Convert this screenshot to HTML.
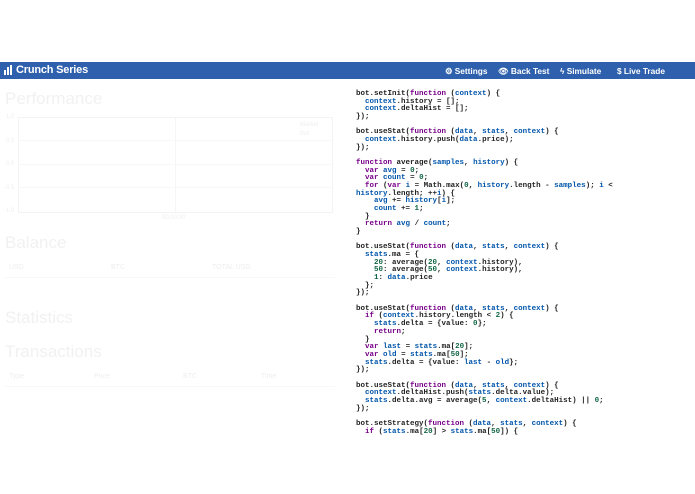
<!DOCTYPE html>
<html><head><meta charset="utf-8"><style>
body{margin:0;width:695px;height:494px;background:#fff;font-family:"Liberation Sans",sans-serif;position:relative;overflow:hidden}
.nav{position:absolute;left:0;top:62px;width:695px;height:17px;background:#2e60ad;color:#fff;font-weight:bold;font-size:9px}
.brand{position:absolute;left:16px;top:2px;font-size:11px;letter-spacing:-0.2px}
.bar{position:absolute;background:#fff;width:2px}
.nl{position:absolute;top:4px;font-size:8.3px}
.h{position:absolute;left:5px;color:#f1f1f1;font-size:17px}
.s{position:absolute;color:#eee;font-size:6px}
pre{position:absolute;left:356px;top:91px;margin:0;font-family:"Liberation Mono",monospace;font-size:7.5px;line-height:7.67px;color:#222;font-weight:bold}
.k{color:#708}.v{color:#05a}.n{color:#164}
</style></head><body>
<div class="nav"><span class="bar" style="left:4px;top:8px;height:5px"></span><span class="bar" style="left:7px;top:5px;height:8px"></span><span class="bar" style="left:10px;top:3px;height:10px"></span><span class="brand">Crunch Series</span>
<span class="nl" style="left:445px">⚙ Settings</span>
<span class="nl" style="left:498px">👁 Back Test</span>
<span class="nl" style="left:560px">ϟ Simulate</span>
<span class="nl" style="left:617px">$ Live Trade</span></div>
<div class="h" style="top:89px">Performance</div>
<div style="position:absolute;left:18px;top:117px;width:313px;height:94px;border:1px solid #f3f3f3"></div>
<div style="position:absolute;left:175px;top:117px;width:1px;height:95px;background:#f5f5f5"></div>
<div style="position:absolute;left:18px;top:140px;width:313px;height:1px;background:#f7f7f7"></div>
<div style="position:absolute;left:18px;top:164px;width:313px;height:1px;background:#f7f7f7"></div>
<div style="position:absolute;left:18px;top:187px;width:313px;height:1px;background:#f7f7f7"></div>
<div class="s" style="left:6px;top:114px">1.0</div><div class="s" style="left:6px;top:138px">0.5</div><div class="s" style="left:6px;top:161px">0.0</div><div class="s" style="left:4px;top:185px">-0.5</div><div class="s" style="left:4px;top:208px">-1.0</div>
<div class="s" style="left:162px;top:215px">00:00:00</div>
<div class="s" style="left:300px;top:122px">Market</div><div class="s" style="left:300px;top:131px">Bot</div>
<div class="h" style="top:233px">Balance</div>
<div class="s" style="left:9px;top:264px;font-size:7px">USD</div><div class="s" style="left:111px;top:264px;font-size:7px">BTC</div><div class="s" style="left:212px;top:264px;font-size:7px">TOTAL USD</div>
<div style="position:absolute;left:5px;top:277px;width:330px;height:1px;background:#f7f7f7"></div>
<div class="h" style="top:308px">Statistics</div>
<div class="h" style="top:342px">Transactions</div>
<div class="s" style="left:9px;top:373px;font-size:7px">Type</div><div class="s" style="left:94px;top:373px;font-size:7px">Price</div><div class="s" style="left:183px;top:373px;font-size:7px">BTC</div><div class="s" style="left:261px;top:373px;font-size:7px">Time</div>
<div style="position:absolute;left:5px;top:386px;width:330px;height:1px;background:#f7f7f7"></div>
<pre>bot.setInit(<span class="k">function</span> (<span class="v">context</span>) {
  <span class="v">context</span>.history = [];
  <span class="v">context</span>.deltaHist = [];
});

bot.useStat(<span class="k">function</span> (<span class="v">data</span>, <span class="v">stats</span>, <span class="v">context</span>) {
  <span class="v">context</span>.history.push(<span class="v">data</span>.price);
});

<span class="k">function</span> average(<span class="v">samples</span>, <span class="v">history</span>) {
  <span class="k">var</span> <span class="v">avg</span> = <span class="n">0</span>;
  <span class="k">var</span> <span class="v">count</span> = <span class="n">0</span>;
  <span class="k">for</span> (<span class="k">var</span> <span class="v">i</span> = Math.max(<span class="n">0</span>, <span class="v">history</span>.length - <span class="v">samples</span>); <span class="v">i</span> &lt;
<span class="v">history</span>.length; ++<span class="v">i</span>) {
    <span class="v">avg</span> += <span class="v">history</span>[<span class="v">i</span>];
    <span class="v">count</span> += <span class="n">1</span>;
  }
  <span class="k">return</span> <span class="v">avg</span> / <span class="v">count</span>;
}

bot.useStat(<span class="k">function</span> (<span class="v">data</span>, <span class="v">stats</span>, <span class="v">context</span>) {
  <span class="v">stats</span>.ma = {
    <span class="n">20</span>: average(<span class="n">20</span>, <span class="v">context</span>.history),
    <span class="n">50</span>: average(<span class="n">50</span>, <span class="v">context</span>.history),
    <span class="n">1</span>: <span class="v">data</span>.price
  };
});

bot.useStat(<span class="k">function</span> (<span class="v">data</span>, <span class="v">stats</span>, <span class="v">context</span>) {
  <span class="k">if</span> (<span class="v">context</span>.history.length &lt; <span class="n">2</span>) {
    <span class="v">stats</span>.delta = {value: <span class="n">0</span>};
    <span class="k">return</span>;
  }
  <span class="k">var</span> <span class="v">last</span> = <span class="v">stats</span>.ma[<span class="n">20</span>];
  <span class="k">var</span> <span class="v">old</span> = <span class="v">stats</span>.ma[<span class="n">50</span>];
  <span class="v">stats</span>.delta = {value: <span class="v">last</span> - <span class="v">old</span>};
});

bot.useStat(<span class="k">function</span> (<span class="v">data</span>, <span class="v">stats</span>, <span class="v">context</span>) {
  <span class="v">context</span>.deltaHist.push(<span class="v">stats</span>.delta.value);
  <span class="v">stats</span>.delta.avg = average(<span class="n">5</span>, <span class="v">context</span>.deltaHist) || <span class="n">0</span>;
});

bot.setStrategy(<span class="k">function</span> (<span class="v">data</span>, <span class="v">stats</span>, <span class="v">context</span>) {
  <span class="k">if</span> (<span class="v">stats</span>.ma[<span class="n">20</span>] &gt; <span class="v">stats</span>.ma[<span class="n">50</span>]) {</pre>
</body></html>
